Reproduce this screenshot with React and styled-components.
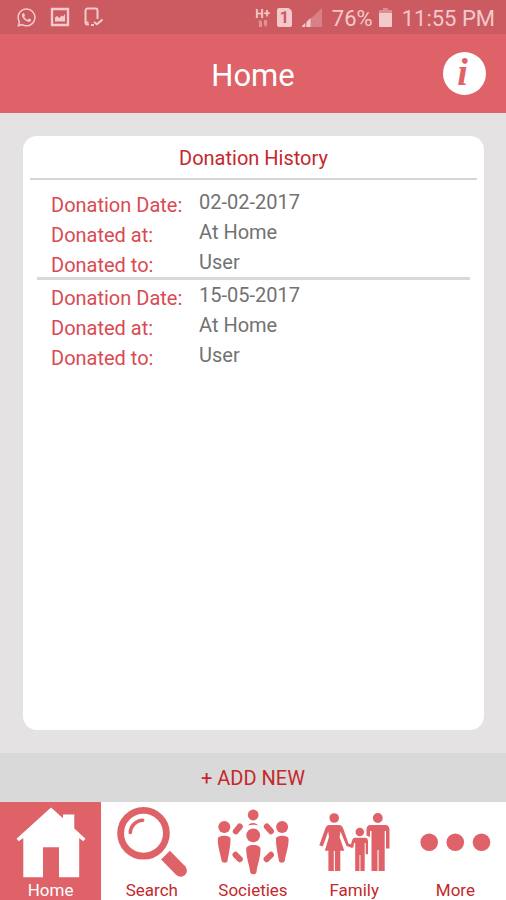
import React from "react";
import styled, { createGlobalStyle } from "styled-components";
import { FaWhatsapp } from "react-icons/fa";

const colors = {
  primary: "#de6267",
  statusBar: "#cb5a61",
  statusText: "#f3c9cb",
  accent: "#c4282b",
  label: "#d94a52",
  value: "#727272",
  page: "#e4e2e3",
  bar: "#d9d9d9",
};

const GlobalStyle = createGlobalStyle`
  * {
    box-sizing: border-box;
  }
  body {
    margin: 0;
    font-family: Roboto, "Liberation Sans", sans-serif;
    background: ${colors.page};
  }
`;

const Screen = styled.div`
  display: flex;
  flex-direction: column;
  min-height: 100vh;
`;

const StatusBar = styled.div`
  display: flex;
  justify-content: space-between;
  align-items: center;
  height: 34px;
  padding: 0 11px 0 16px;
  color: ${colors.statusText};
  background: ${colors.statusBar};
  font-size: 22px;
`;

const StatusGroup = styled.div`
  display: flex;
  align-items: center;
  gap: ${(props) => props.$gap}px;
`;

const Network = styled.span`
  display: flex;
  flex-direction: column;
  align-items: center;
  width: 16px;
  font-size: 12px;
  font-weight: 700;
  line-height: 12px;
`;

const SimCard = styled.span`
  width: 15px;
  height: 19px;
  margin-right: 4px;
  color: ${colors.statusBar};
  background: ${colors.statusText};
  border-radius: 2px 5px 2px 2px;
  font-size: 16px;
  font-weight: 700;
  line-height: 19px;
  text-align: center;
`;

const Clock = styled.span`
  margin-left: 4px;
  padding-top: 2px;
`;

const Header = styled.header`
  display: grid;
  grid-template-columns: 1fr auto 1fr;
  align-items: center;
  height: 79px;
  padding: 0 20px;
  background: ${colors.primary};
  color: #fff;
`;

const Title = styled.h1`
  grid-column: 2;
  margin: 0;
  font-size: 31px;
  font-weight: 400;
  line-height: 40px;
  padding-top: 4px;
`;

const InfoButton = styled.button`
  justify-self: end;
  width: 43px;
  height: 43px;
  padding: 0 4px 4px 0;
  border: 0;
  border-radius: 50%;
  background: #fff;
  color: ${colors.primary};
  font: italic 700 38px/38px "Liberation Serif", serif;
`;

const Main = styled.main`
  display: flex;
  flex: 1;
  padding: 23px 22px 23px 23px;
`;

const Card = styled.section`
  flex: 1;
  padding: 0 7px;
  background: #fff;
  border-radius: 14px;
`;

const CardTitle = styled.h2`
  margin: 0;
  height: 44px;
  border-bottom: 2px solid #d3d5d6;
  color: ${colors.accent};
  font-size: 20px;
  font-weight: 400;
  line-height: 44px;
  text-align: center;
`;

const Record = styled.dl`
  display: grid;
  grid-template-columns: 148px 1fr;
  margin: 0 7px;
  padding: 7px 0 0 14px;
  font-size: 20px;
  line-height: 30px;

  & + & {
    padding-top: 0;
    border-top: 3px solid #d9d9d9;
  }
`;

const Label = styled.dt`
  padding-top: 3px;
  height: 30px;
  color: ${colors.label};
`;

const Value = styled.dd`
  margin: 0;
  color: ${colors.value};
`;

const AddButton = styled.button`
  height: 49px;
  padding: 0;
  border: 0;
  background: ${colors.bar};
  color: ${colors.accent};
  font-family: inherit;
  font-size: 20px;
`;

const TabBar = styled.nav`
  display: grid;
  grid-template-columns: repeat(5, 1fr);
  height: 98px;
  background: #fff;
`;

const Tab = styled.a`
  display: flex;
  flex-direction: column;
  align-items: center;
  padding-top: 2px;
  background: ${(props) => (props.$active ? colors.primary : "#fff")};
  color: ${(props) => (props.$active ? "#fff" : colors.accent)};
  font-size: 17px;
  line-height: 20px;
  text-decoration: none;

  svg {
    width: 76px;
    height: 76px;
    color: ${(props) => (props.$active ? "#fff" : colors.primary)};
  }
`;

const PictureIcon = () => (
  <svg width="20" height="20" viewBox="0 0 20 20">
    <path d="M2 2h16v16H2z" fill="none" stroke="currentColor" strokeWidth="2.4" />
    <path d="M5 14.500v-4l2-1.500 2.500 2 2-2.500 1.500 1L15 7v7.500z" fill="currentColor" />
  </svg>
);

const DeviceIcon = () => (
  <svg width="20" height="20" viewBox="0 0 20 20" fill="none" stroke="currentColor">
    <path d="M14.500 12V3.500a2 2 0 0 0-2-2h-8a2 2 0 0 0-2 2v12a2 2 0 0 0 2 2H6" strokeWidth="2" />
    <path d="M2.500 15.500h3M8 18h3" strokeWidth="2" />
    <path d="M11 15l3 2.300L19.500 12.500" strokeWidth="2" />
  </svg>
);

const DataIcon = () => (
  <svg width="10" height="7" viewBox="0 0 10 7" fill="currentColor" opacity="0.5">
    <path d="M0 2l2-2 2 2v5H1V2zM6 0h3v5l-1.500 2L6 5z" />
  </svg>
);

const SignalIcon = () => (
  <svg width="20" height="19" viewBox="0 0 20 19" fill="currentColor">
    <path d="M0 19L20 0v19z" opacity="0.35" />
    <path d="M0 19v-1l3-3v4zM4.500 19v-5l4-4v9z" />
  </svg>
);

const BatteryIcon = () => (
  <svg width="13" height="19" viewBox="0 0 13 19" fill="currentColor">
    <path d="M0 2h4V0h5v2h4v3H0z" opacity="0.45" />
    <path d="M0 5h13v13a1 1 0 0 1-1 1H1a1 1 0 0 1-1-1z" />
  </svg>
);

const HomeIcon = () => (
  <svg viewBox="0 0 76 76" fill="currentColor">
    <path d="M38 3.500L50 14.300V10.500H61.300V24.500L72.500 34.800 70.300 37.200 66.200 34V73.300H46V43.300H30V73.300H10.300V34L5.800 37.200 3.500 34.800z" />
  </svg>
);

const SearchIcon = () => (
  <svg viewBox="0 0 76 76" fill="none" stroke="currentColor">
    <circle cx="29.500" cy="29.300" r="22.900" strokeWidth="6.800" />
    <path d="M16.300 28.500A12.800 12.800 0 0 1 28.700 16.200" strokeWidth="3.600" strokeLinecap="round" />
    <path d="M51.500 51.200L66.700 66.600" strokeWidth="12.400" />
    <circle cx="66.700" cy="66.600" r="6.200" fill="currentColor" stroke="none" />
  </svg>
);

const SocietiesIcon = () => (
  <svg viewBox="0 0 76 76" fill="currentColor">
    <circle cx="38.200" cy="11" r="5.400" />
    <path d="M33.300 21.500C35 18.300 41.500 18.300 43.300 21.500C40.500 20.500 36 20.500 33.300 21.500z" />
    <circle cx="38.200" cy="31.300" r="6.900" />
    <path d="M31.200 45C31.200 39.700 45.500 39.700 45.500 45C45.500 54 42.500 60 41.500 68C41.200 71 35.500 71 35.200 68C34.200 60 31.200 54 31.200 45z" />
    <circle cx="9.300" cy="23" r="6" />
    <path d="M2.800 35C2.800 30.700 15.500 30.700 15.500 35C15.500 44 13.500 50 12.500 57C12.200 59.300 7 59.300 6.700 57C5.500 50 2.800 44 2.800 35z" />
    <circle cx="67.100" cy="23" r="6" />
    <path d="M61 35C61 30.700 73.600 30.700 73.600 35C73.600 44 70.700 50 69.700 57C69.300 59.300 64.300 59.300 64 57C63 50 61 44 61 35z" />
    <g stroke="currentColor" strokeWidth="6" strokeLinecap="round">
      <path d="M24.800 22.500L20.800 27.300M51.800 22.500L56 27.300M20.500 50.800L24.800 55.200M56 50.800L51.600 55.200" />
    </g>
  </svg>
);

const FamilyIcon = () => (
  <svg viewBox="0 0 76 76" fill="currentColor">
    <circle cx="18.200" cy="14" r="4.800" />
    <path d="M13.500 21H23C25 21 26.200 22 27 24L32.500 39.500L37 41.300L36 43.800L30.500 42L24.500 27.500L23.600 33L28.300 46.700H24.300V67H18.900V47H17.800V67H12.400V46.700H8.800L13 33L12.200 27.500L6.800 42.500L3.300 41.300L9.500 24C10.300 22 11.500 21 13.500 21z" />
    <circle cx="43.800" cy="28" r="4.300" />
    <path d="M39 33.700H49C51 33.700 52 35 52 37V50.300H49.700V39H48.700V67H44.400V51H43.500V67H39.200V39H38L37.300 43.700L34 43L36 37C36.600 34.700 37.300 33.700 39 33.700z" />
    <circle cx="61.800" cy="14" r="4.900" />
    <path d="M54.500 21H69C72 21 73.500 23 73.500 25.500V44.500H70V27H68.700V67H62.600V46H61.500V67H55.500V27H54V33L50.500 31.500V25.500C50.500 23 51.800 21 54.500 21z" />
  </svg>
);

const MoreIcon = () => (
  <svg viewBox="0 0 76 76" fill="currentColor">
    <circle cx="12.200" cy="38.300" r="8.800" />
    <circle cx="38.300" cy="38.300" r="8.800" />
    <circle cx="64.500" cy="38.300" r="8.800" />
  </svg>
);

const donations = [
  { date: "02-02-2017", place: "At Home", recipient: "User" },
  { date: "15-05-2017", place: "At Home", recipient: "User" },
];

const tabs = [
  { name: "Home", Icon: HomeIcon, active: true },
  { name: "Search", Icon: SearchIcon },
  { name: "Societies", Icon: SocietiesIcon },
  { name: "Family", Icon: FamilyIcon },
  { name: "More", Icon: MoreIcon },
];

export default function App() {
  return (
    <Screen>
      <GlobalStyle />
      <StatusBar>
        <StatusGroup $gap={13}>
          <FaWhatsapp size={21} />
          <PictureIcon />
          <DeviceIcon />
        </StatusGroup>
        <StatusGroup $gap={6}>
          <Network>
            H+
            <DataIcon />
          </Network>
          <SimCard>1</SimCard>
          <SignalIcon />
          <Clock>76%</Clock>
          <BatteryIcon />
          <Clock>11:55 PM</Clock>
        </StatusGroup>
      </StatusBar>
      <Header>
        <Title>Home</Title>
        <InfoButton aria-label="Information">i</InfoButton>
      </Header>
      <Main>
        <Card>
          <CardTitle>Donation History</CardTitle>
          {donations.map((donation) => (
            <Record key={donation.date}>
              <Label>Donation Date:</Label>
              <Value>{donation.date}</Value>
              <Label>Donated at:</Label>
              <Value>{donation.place}</Value>
              <Label>Donated to:</Label>
              <Value>{donation.recipient}</Value>
            </Record>
          ))}
        </Card>
      </Main>
      <AddButton>+ ADD NEW</AddButton>
      <TabBar>
        {tabs.map(({ name, Icon, active }) => (
          <Tab key={name} href={`#${name.toLowerCase()}`} $active={active}>
            <Icon />
            {name}
          </Tab>
        ))}
      </TabBar>
    </Screen>
  );
}
